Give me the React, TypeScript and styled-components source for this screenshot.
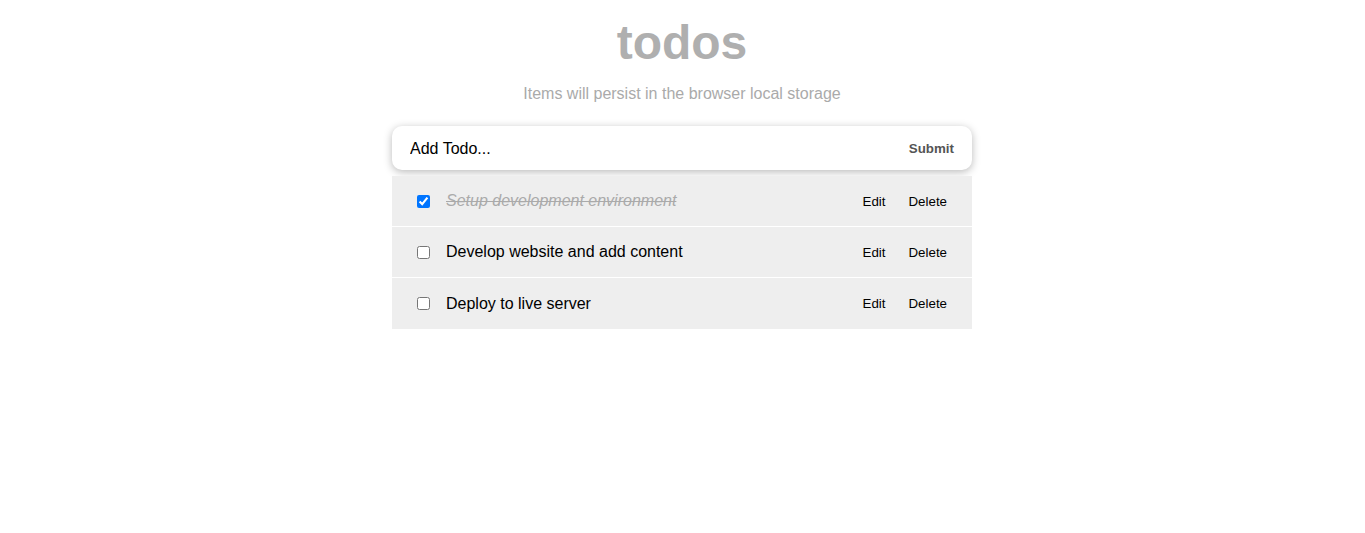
import React, { useState } from "react";
import styled, { createGlobalStyle } from "styled-components";

interface ITodo {
  id: number;
  text: string;
  done: boolean;
}

const GlobalStyle = createGlobalStyle`
  body {
    margin: 0;
    background: #fff;
    font-family: "Liberation Sans", Arial, sans-serif;
  }
`;

const Page = styled.div`
  display: flex;
  flex-direction: column;
  align-items: center;
  padding: 16px 1px 0 0;
`;

const Title = styled.h1`
  margin: 0;
  font-size: 48px;
  line-height: 54px;
  font-weight: bold;
  color: #afafaf;
`;

const Subtitle = styled.p`
  margin: 15px 0 0;
  font-size: 16px;
  line-height: 18px;
  color: #aaaaaa;
`;

const Form = styled.form`
  box-sizing: border-box;
  width: 580px;
  height: 44px;
  margin-top: 23px;
  padding: 1px 18px 0;
  display: flex;
  align-items: center;
  background: #fff;
  border-radius: 10px;
  box-shadow: 0 2px 8px rgba(0, 0, 0, 0.28);
`;

const Input = styled.input`
  flex: 1;
  border: none;
  outline: none;
  padding: 0;
  background: transparent;
  font-family: inherit;
  font-size: 16px;
  color: #000;

  &::placeholder {
    color: #000;
  }
`;

const Submit = styled.button`
  border: none;
  background: none;
  padding: 0;
  font-family: inherit;
  font-size: 13.333px;
  font-weight: bold;
  color: #555;
  cursor: pointer;
`;

const List = styled.ul`
  list-style: none;
  margin: 6px 0 0;
  padding: 0;
  width: 580px;
`;

const Row = styled.li`
  box-sizing: border-box;
  height: 51px;
  padding: 0 25px;
  display: flex;
  align-items: center;
  background: #eeeeee;
  border-bottom: 1px solid #fff;

  &:last-child {
    border-bottom: none;
  }
`;

const Check = styled.input`
  margin: 0 16px 0 0;
  width: 13px;
  height: 13px;
`;

const Text = styled.span<{ $done: boolean }>`
  flex: 1;
  font-size: 16px;
  color: ${({ $done }) => ($done ? "#aaa" : "#000")};
  font-style: ${({ $done }) => ($done ? "italic" : "normal")};
  text-decoration: ${({ $done }) => ($done ? "line-through" : "none")};
`;

const Actions = styled.div`
  display: flex;
  gap: 23px;
`;

const Action = styled.button`
  border: none;
  background: none;
  padding: 0;
  font-family: inherit;
  font-size: 13.333px;
  color: #000;
  cursor: pointer;
`;

const initial: ITodo[] = [
  { id: 1, text: "Setup development environment", done: true },
  { id: 2, text: "Develop website and add content", done: false },
  { id: 3, text: "Deploy to live server", done: false },
];

const App = () => {
  const [todos, setTodos] = useState<ITodo[]>(initial);

  const toggle = (id: number) =>
    setTodos(todos.map((t) => (t.id === id ? { ...t, done: !t.done } : t)));

  return (
    <Page>
      <GlobalStyle />
      <Title>todos</Title>
      <Subtitle>Items will persist in the browser local storage</Subtitle>
      <Form onSubmit={(e) => e.preventDefault()}>
        <Input placeholder="Add Todo..." />
        <Submit type="submit">Submit</Submit>
      </Form>
      <List>
        {todos.map((t) => (
          <Row key={t.id}>
            <Check type="checkbox" checked={t.done} onChange={() => toggle(t.id)} />
            <Text $done={t.done}>{t.text}</Text>
            <Actions>
              <Action>Edit</Action>
              <Action>Delete</Action>
            </Actions>
          </Row>
        ))}
      </List>
    </Page>
  );
};

export default App;
